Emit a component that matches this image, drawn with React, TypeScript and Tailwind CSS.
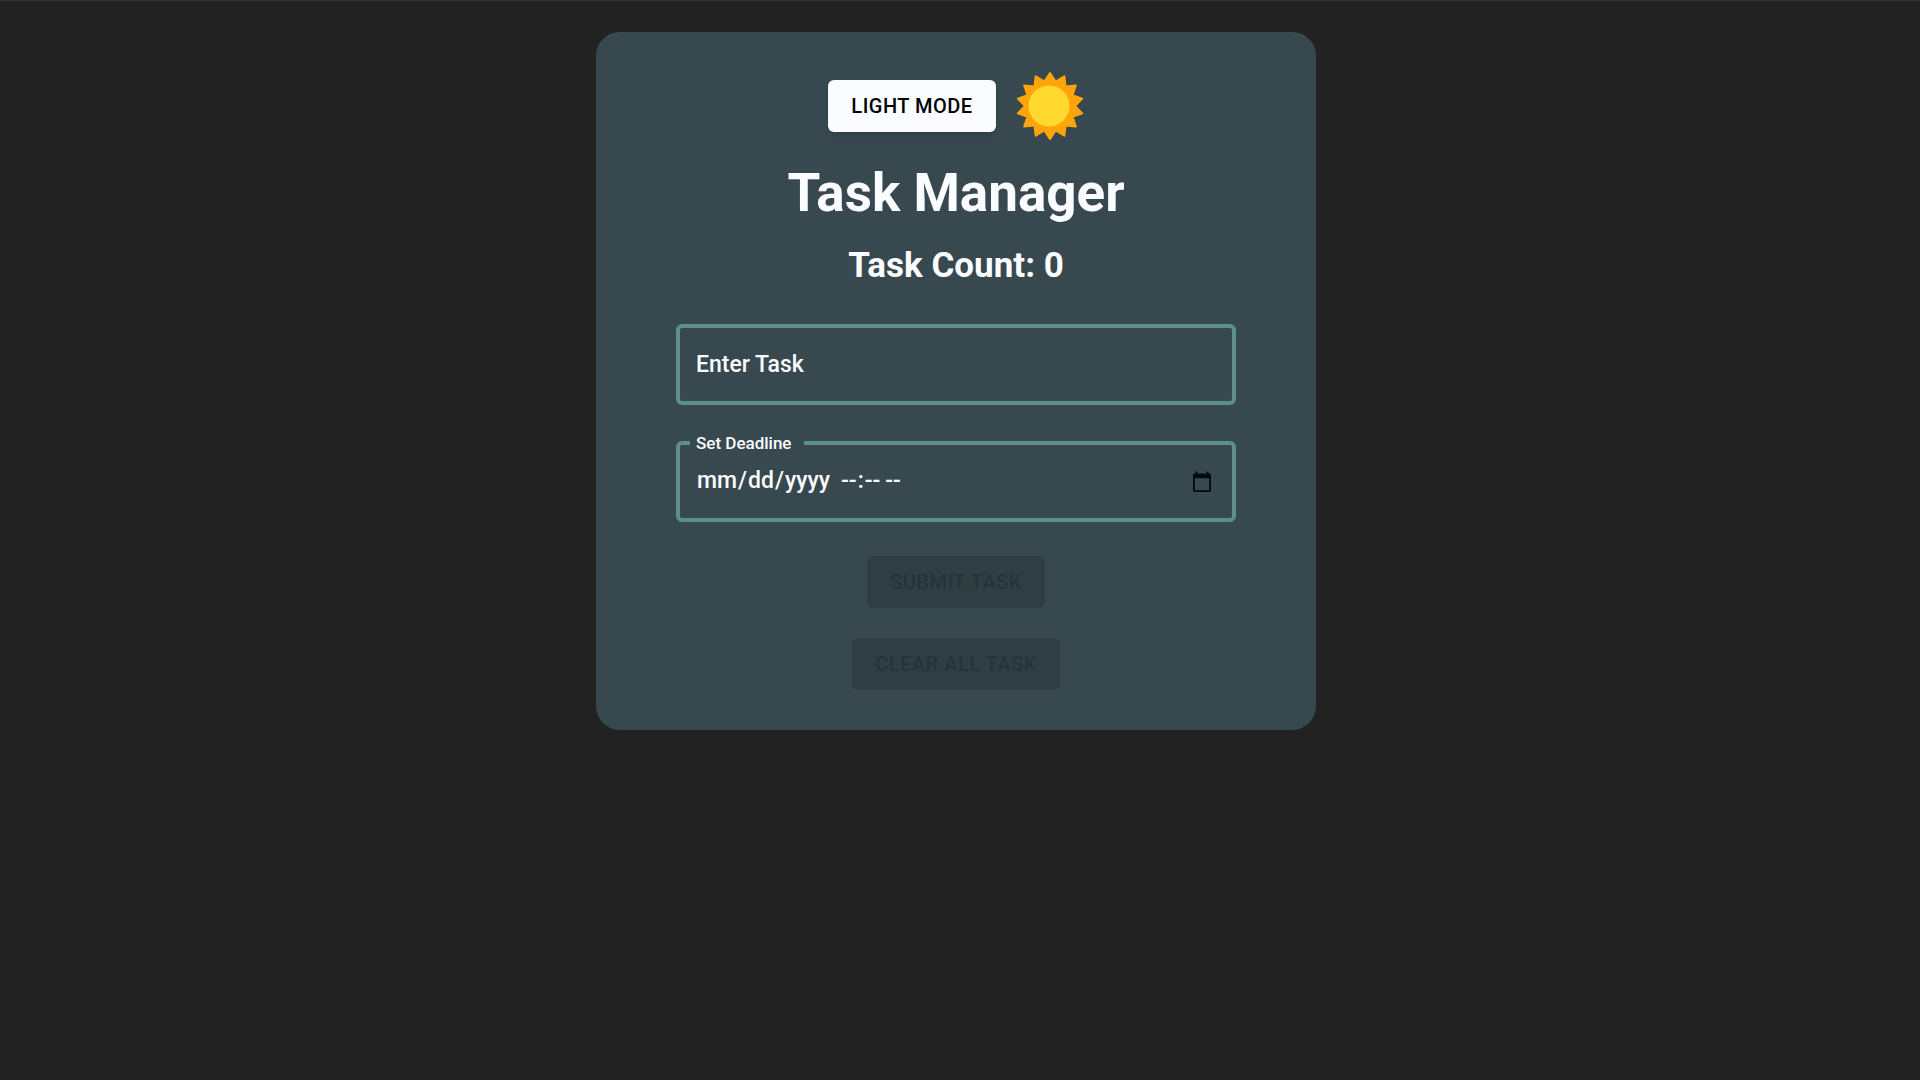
import React, { useRef, useState } from 'react'

// Points of the 14-ray star behind the sun's disc
const RAYS = 14
const sunPoints = [...Array(RAYS * 2)]
  .map((_, i) => {
    const radius = i % 2 === 0 ? 33 : 25
    const angle = (Math.PI * i) / RAYS - Math.PI / 2
    return `${(34 + radius * Math.cos(angle)).toFixed(2)},${(34 + radius * Math.sin(angle)).toFixed(2)}`
  })
  .join(' ')

function SunIcon() {
  return (
    <svg className="w-[68px] h-[68px]" viewBox="0 0 68 68" aria-hidden="true">
      <polygon points={sunPoints} fill="#ffa50a" stroke="#ffa50a" strokeWidth="2" strokeLinejoin="round" />
      <circle cx="33" cy="34" r="20.5" fill="#ffd92f" />
    </svg>
  )
}

function CalendarIcon() {
  return (
    <svg className="w-5 h-[22px]" viewBox="0 0 20 22" aria-hidden="true">
      <path
        fillRule="evenodd"
        fill="#000a10"
        d="M3.5 0.5h2v2h9v-2h2v2h1c.8 0 1.5.7 1.5 1.5V19.5c0 .8-.7 1.5-1.5 1.5h-15C1.7 21 1 20.3 1 19.5V4c0-.8.7-1.5 1.5-1.5h1zM2.8 7.2v12h14.4v-12z"
      />
    </svg>
  )
}

const buttonBase = 'h-[52px] px-[23px] pb-px rounded-md text-xl font-medium uppercase tracking-wide'
const fieldBase = 'bg-transparent text-[23px] font-medium outline-none'

export default function App() {
  const [task, setTask] = useState('')
  const [date, setDate] = useState('')
  const [time, setTime] = useState('')
  const dateRef = useRef<HTMLInputElement>(null)

  return (
    <div className="min-h-screen bg-[#222222] border-t border-[#333333] pt-[31px] pr-2 font-[Roboto,sans-serif] text-[#fbfcff]">
      <main className="max-w-[720px] mx-auto px-20 py-10 rounded-3xl bg-[#38484f] flex flex-col items-center">
        <div className="flex items-center gap-5">
          <button type="button" className={`${buttonBase} bg-[#fbfcff] text-black shadow-md`}>
            Light Mode
          </button>
          <SunIcon />
        </div>

        <h1 className="mt-5 text-[53px] leading-[66px] font-bold">Task Manager</h1>
        <h2 className="mt-5 text-[35px] leading-10 font-bold">Task Count: 0</h2>

        <form className="w-full mt-[38px] flex flex-col items-center" onSubmit={(e) => e.preventDefault()}>
          <input
            type="text"
            aria-label="Enter Task"
            placeholder="Enter Task"
            value={task}
            onChange={(e) => setTask(e.target.value)}
            className={`${fieldBase} w-full h-[81px] px-4 border-4 border-[#5b8f88] rounded-md placeholder:text-[#fbfcff]`}
          />

          <fieldset className="w-full mt-7 border-4 border-[#5b8f88] rounded-md">
            <legend className="ml-[10px] pl-[6px] pr-[13px] text-[17px] leading-5 font-medium">
              <label htmlFor="deadline-date">Set Deadline</label>
            </legend>
            <div className="flex items-center h-[65px] px-4 pb-2">
              <input
                ref={dateRef}
                id="deadline-date"
                type="date"
                value={date}
                onChange={(e) => setDate(e.target.value)}
                className={`${fieldBase} w-36 [&::-webkit-calendar-picker-indicator]:hidden`}
              />
              <input
                type="time"
                aria-label="Deadline time"
                value={time}
                onChange={(e) => setTime(e.target.value)}
                className={`${fieldBase} [&::-webkit-calendar-picker-indicator]:hidden`}
              />
              <button
                type="button"
                aria-label="Pick a deadline"
                className="ml-auto mr-1"
                onClick={() => dateRef.current?.showPicker()}
              >
                <CalendarIcon />
              </button>
            </div>
          </fieldset>

          <button type="submit" disabled className={`${buttonBase} mt-[34px] bg-[#303e44] text-[#25343a]`}>
            Submit Task
          </button>
          <button type="button" disabled className={`${buttonBase} mt-[30px] bg-[#303e44] text-[#25343a]`}>
            Clear All Task
          </button>
        </form>
      </main>
    </div>
  )
}
